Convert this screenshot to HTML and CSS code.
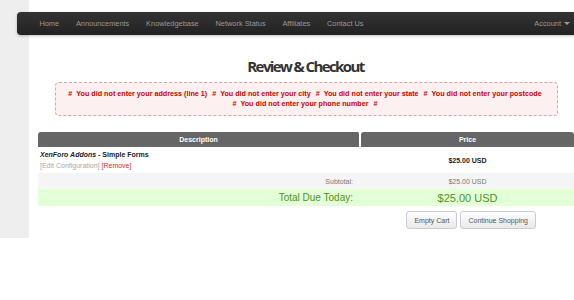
FILE: index.html
```html
<!DOCTYPE html>
<html lang="en">
<head>
  <meta charset="UTF-8" />
  <title>Review &amp; Checkout</title>
  <link rel="stylesheet" href="styles.css">
</head>
<body>

  <div class="wrap">
    <div class="side"></div>

    <div class="main">
      <div class="navbar">
        <ul class="nav">
          <li>Home</li>
          <li>Announcements</li>
          <li>Knowledgebase</li>
          <li>Network Status</li>
          <li>Affiliates</li>
          <li>Contact Us</li>
        </ul>
        <div class="account">Account <span class="caret"></span></div>
      </div>

      <h1>Review &amp; Checkout</h1>

      <div class="errorbox">
        <ul>
          <li>#&nbsp;&nbsp;You did not enter your address (line 1)</li>
          <li>#&nbsp;&nbsp;You did not enter your city</li>
          <li>#&nbsp;&nbsp;You did not enter your state</li>
          <li>#&nbsp;&nbsp;You did not enter your postcode</li>
          <li>#&nbsp;&nbsp;You did not enter your phone number</li>
          <li>#</li>
        </ul>
      </div>

      <table class="cart">
        <tr>
          <th>Description</th>
          <th class="price-col">Price</th>
        </tr>
        <tr class="item">
          <td>
            <div class="name"><em>XenForo Addons</em> - Simple Forms</div>
            <div class="links"><span class="edit">[Edit Configuration]</span> <span class="remove">[Remove]</span></div>
          </td>
          <td class="amount"><b>$25.00 USD</b></td>
        </tr>
        <tr class="subtotal">
          <td class="label">Subtotal:</td>
          <td class="amount">$25.00 USD</td>
        </tr>
        <tr class="total">
          <td class="label">Total Due Today:</td>
          <td class="amount">$25.00 USD</td>
        </tr>
      </table>

      <div class="actions">
        <button>Empty Cart</button>
        <button>Continue Shopping</button>
      </div>
    </div>
  </div>

</body>
</html>
```

FILE: styles.css
```css
* {
  box-sizing: border-box;
  margin: 0;
  padding: 0;
}

body {
  background: #fff;
  font-family: 'Liberation Sans', Arial, sans-serif;
  color: #333;
  overflow: hidden;
}

.wrap {
  display: flex;
  height: 238px;
}

.side {
  width: 29px;
  flex-shrink: 0;
  background: #eeeeee;
}

.main {
  flex: 1;
  min-width: 0;
}

/* top menu */
.navbar {
  margin: 12px -40px 0 -12px;
  height: 23px;
  display: flex;
  align-items: center;
  justify-content: space-between;
  padding: 0 44px 0 14px;
  background: linear-gradient(#333, #222);
  border-radius: 4px;
  box-shadow: 0 1px 3px rgba(0,0,0,0.25);
  font-size: 7.4px;
  color: #999;
}

.nav {
  list-style: none;
  display: flex;
}

.nav li {
  padding: 0 8.4px;
}

.account {
  display: flex;
  align-items: center;
  gap: 3px;
}

.caret {
  border-top: 3px solid #999;
  border-left: 3px solid transparent;
  border-right: 3px solid transparent;
}

h1 {
  margin-top: 22px;
  padding-left: 8px;
  text-align: center;
  font-family: 'Open Sans', sans-serif;
  font-size: 15px;
  font-weight: 700;
  letter-spacing: -1.6px;
  color: #333;
  line-height: 18px;
}

.errorbox {
  margin: 7px 16px 0 26px;
  height: 34px;
  padding: 6px 4px;
  background: #fdf0f0;
  border: 1px dashed #d9a5a5;
  border-radius: 4px;
  color: #c00;
  font-size: 7.2px;
  font-weight: 700;
  text-align: center;
  line-height: 10px;
}

.errorbox ul {
  list-style: none;
}

.errorbox li {
  display: inline;
  margin-right: 3px;
}

/* cart table */
.cart {
  margin: 16px 0 0 9px;
  width: 536px;
  border-collapse: separate;
  border-spacing: 0;
  font-size: 7px;
}

.cart th {
  height: 15px;
  background: #666;
  color: #fff;
  font-weight: 700;
  border-radius: 3px 3px 0 0;
}

.cart th:first-child {
  width: 323px;
  border-right: 2px solid #fff;
}

.item td {
  height: 24px;
  padding: 2px 2px;
}

.name {
  font-weight: 700;
  color: #222;
  line-height: 11px;
}

.links {
  color: #a8a8a8;
  line-height: 11px;
}

.links .remove {
  color: #c33;
}

.amount {
  text-align: center;
  color: #222;
}

.subtotal td {
  height: 16px;
  background: #f5f5f5;
  color: #777;
}

.label {
  text-align: right;
  padding-right: 8px;
}

.subtotal .amount {
  color: #777;
}

.total td {
  height: 17px;
  background: #e3ffd7;
  color: #4f9321;
  font-size: 10px;
}

.total .amount {
  font-size: 11px;
  color: #4f9321;
}

.actions {
  margin: 5px 38px 0 0;
  display: flex;
  justify-content: flex-end;
  gap: 3px;
}

.actions button {
  height: 18px;
  padding: 0 7px;
  font-family: inherit;
  font-size: 7px;
  font-weight: 400;
  color: #555;
  background: linear-gradient(#fff, #e8e8e8);
  border: 1px solid #ccc;
  border-radius: 3px;
}
```
